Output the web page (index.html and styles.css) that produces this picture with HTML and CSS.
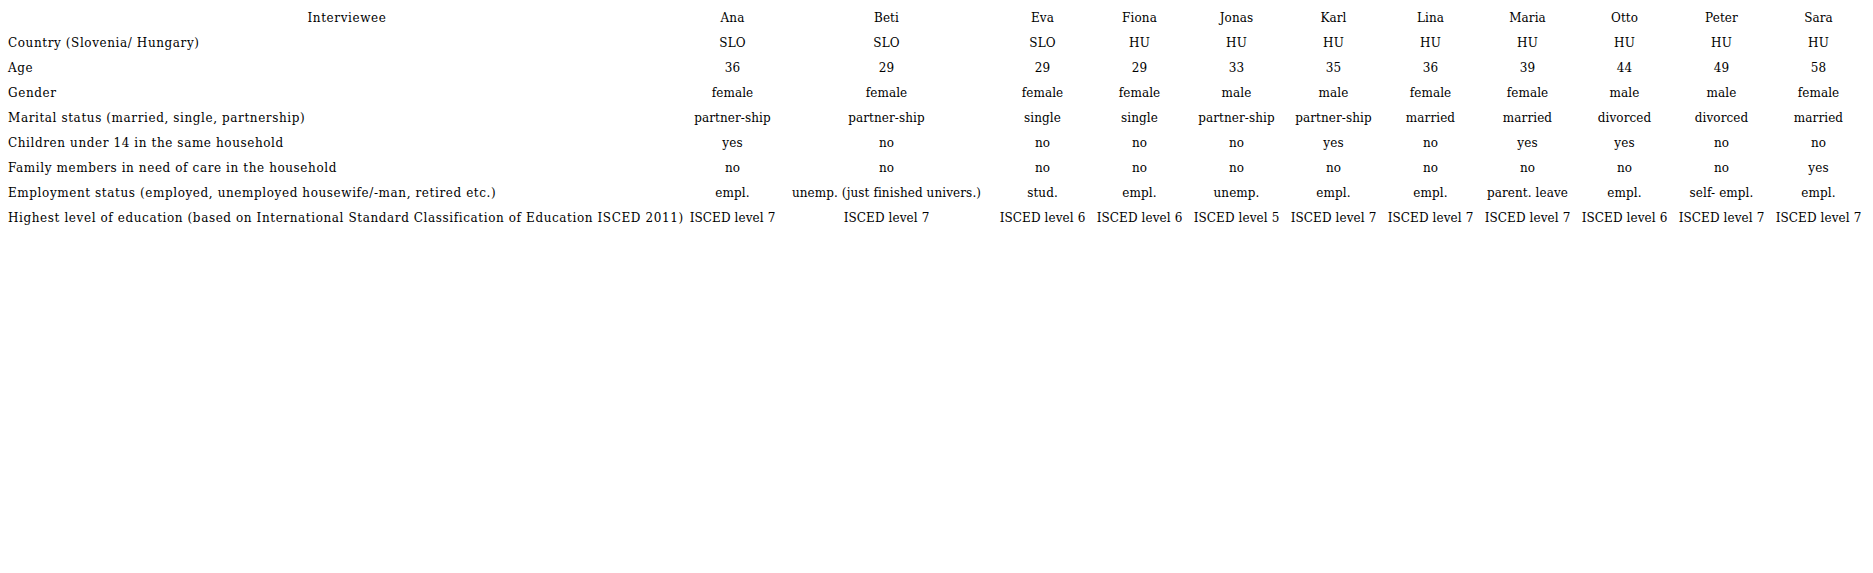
FILE: index.html
```html
<!DOCTYPE html>
<html lang="en">
<head>
<meta charset="utf-8">
<title>Interviewees</title>
<link rel="stylesheet" href="styles.css">
</head>
<body>
<table class="data">
  <colgroup>
    <col class="c-label"><col class="c-ana"><col class="c-beti"><col class="c-std"><col class="c-std"><col class="c-std"><col class="c-std"><col class="c-std"><col class="c-std"><col class="c-std"><col class="c-std"><col class="c-std">
  </colgroup>
  <tr class="head"><td class="label center">Interviewee</td><td>Ana</td><td>Beti</td><td>Eva</td><td>Fiona</td><td>Jonas</td><td>Karl</td><td>Lina</td><td>Maria</td><td>Otto</td><td>Peter</td><td>Sara</td></tr>
  <tr><td class="label">Country (Slovenia/ Hungary)</td><td>SLO</td><td>SLO</td><td>SLO</td><td>HU</td><td>HU</td><td>HU</td><td>HU</td><td>HU</td><td>HU</td><td>HU</td><td>HU</td></tr>
  <tr><td class="label">Age</td><td>36</td><td>29</td><td>29</td><td>29</td><td>33</td><td>35</td><td>36</td><td>39</td><td>44</td><td>49</td><td>58</td></tr>
  <tr><td class="label">Gender</td><td>female</td><td>female</td><td>female</td><td>female</td><td>male</td><td>male</td><td>female</td><td>female</td><td>male</td><td>male</td><td>female</td></tr>
  <tr><td class="label">Marital status (married, single, partnership)</td><td>partner-ship</td><td>partner-ship</td><td>single</td><td>single</td><td>partner-ship</td><td>partner-ship</td><td>married</td><td>married</td><td>divorced</td><td>divorced</td><td>married</td></tr>
  <tr><td class="label">Children under 14 in the same household</td><td>yes</td><td>no</td><td>no</td><td>no</td><td>no</td><td>yes</td><td>no</td><td>yes</td><td>yes</td><td>no</td><td>no</td></tr>
  <tr><td class="label">Family members in need of care in the household</td><td>no</td><td>no</td><td>no</td><td>no</td><td>no</td><td>no</td><td>no</td><td>no</td><td>no</td><td>no</td><td>yes</td></tr>
  <tr><td class="label">Employment status (employed, unemployed housewife/-man, retired etc.)</td><td>empl.</td><td>unemp. (just finished univers.)</td><td>stud.</td><td>empl.</td><td>unemp.</td><td>empl.</td><td>empl.</td><td>parent. leave</td><td>empl.</td><td>self- empl.</td><td>empl.</td></tr>
  <tr><td class="label">Highest level of education (based on International Standard Classification of Education ISCED 2011)</td><td>ISCED level 7</td><td>ISCED level 7</td><td>ISCED level 6</td><td>ISCED level 6</td><td>ISCED level 5</td><td>ISCED level 7</td><td>ISCED level 7</td><td>ISCED level 7</td><td>ISCED level 6</td><td>ISCED level 7</td><td>ISCED level 7</td></tr>
</table>
</body>
</html>
```
FILE: styles.css
```css
body {
  margin: 8px 6px 8px 7px;
  background: #fff;
  color: #000;
  font-family: "DejaVu Serif", serif;
  font-size: 12px;
}
.data {
  width: 1860px;
  table-layout: fixed;
  border-collapse: collapse;
  border-spacing: 0;
}
.c-label { width: 679px; }
.c-ana { width: 93px; }
.c-beti { width: 215px; }
.c-std { width: 97px; }
.data td {
  padding: 0 0 5px 0;
  line-height: 20px;
  text-align: center;
  white-space: nowrap;
  letter-spacing: 0.1px;
}
.data td.label {
  text-align: left;
  padding-left: 1px;
  letter-spacing: 0.6px;
}
.data td.label.center {
  text-align: center;
}
```
